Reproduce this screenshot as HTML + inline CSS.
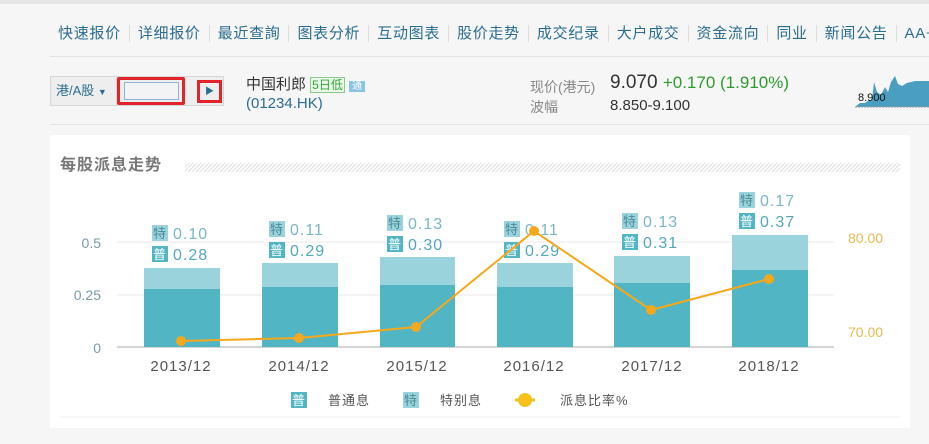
<!DOCTYPE html>
<html><head><meta charset="utf-8"><style>
body{margin:0;width:929px;height:444px;background:#f6f6f6;font-family:"Liberation Sans","Noto Sans CJK SC",sans-serif;position:relative;overflow:hidden}
.a{position:absolute;white-space:nowrap}
.nav span{color:#2b6d8e;font-size:15px;letter-spacing:0.7px;padding:0 8px;border-right:1px solid #ddd}
</style></head><body>
<div class="a" style="left:0;top:0;width:929px;height:4px;background:#e6e6e6"></div>
<div class="a nav" style="left:50px;top:24px;font-size:15px;line-height:20px"><span style="padding-left:8px">快速报价</span><span>详细报价</span><span>最近查詢</span><span>图表分析</span><span>互动图表</span><span>股价走势</span><span>成交纪录</span><span>大户成交</span><span>资金流向</span><span>同业</span><span>新闻公告</span><span style="border:0">AA+</span></div>
<div class="a" style="left:50px;top:56px;width:879px;height:1px;background:#e2e2e2"></div>
<div class="a" style="left:50px;top:76px;width:174px;height:30px;background:#eee;border:1px solid #d6d6d6;box-sizing:border-box"></div>
<div class="a" style="left:50px;top:76px;width:67px;height:30px;border-right:1px solid #d6d6d6;box-sizing:border-box;color:#2b6d8e;font-size:13px;line-height:30px;padding-left:6px">港/A股 <span style="font-size:9px">▼</span></div>
<div class="a" style="left:117px;top:77px;width:68px;height:28px;border:3px solid #e0252a;box-sizing:border-box;border-radius:2px"></div>
<div class="a" style="left:124px;top:82px;width:55px;height:18px;border:1px solid #8cb3d9;background:#f3f3f6;box-sizing:border-box"></div>
<div class="a" style="left:197px;top:80px;width:25px;height:23px;border:3px solid #e0252a;box-sizing:border-box;color:#2b6d8e;font-size:9px;line-height:17px;text-align:center">▶</div>
<div class="a" style="left:246px;top:73px;font-size:15px;color:#333">中国利郎 <span style="font-size:12px;color:#3a3;border:1px solid #8c8;background:#eaf7ea;padding:0 1px">5日低</span> <span style="font-size:10px;color:#fff;background:#8bc3e6;padding:0 3px">通</span></div>
<div class="a" style="left:246px;top:95px;font-size:15px;color:#2b6d8e">(01234.HK)</div>
<div class="a" style="left:530px;top:77px;font-size:14px;color:#888">现价(港元)</div>
<div class="a" style="left:530px;top:97px;font-size:14px;color:#888">波幅</div>
<div class="a" style="left:610px;top:72px;font-size:19px;color:#333">9.070 <span style="color:#2e9b2e;font-size:17px">+0.170 (1.910%)</span></div>
<div class="a" style="left:610px;top:97px;font-size:15px;color:#333">8.850-9.100</div>
<svg class="a" style="left:855px;top:70px" width="74" height="40"><path d="M0 37 L5 33 L10 33 L14 30 L17 30 L19 12 L22 22 L26 25 L30 17 L33 22 L36 12 L40 6 L43 14 L47 16 L52 13 L60 11 L74 11 L74 37 Z" fill="#4a9ec0"/><text x="3" y="31" font-size="11" fill="#111" font-family="Liberation Sans">8.900</text><line x1="0" y1="37" x2="74" y2="37" stroke="#999" stroke-dasharray="2,1"/></svg>
<div class="a" style="left:50px;top:124px;width:879px;height:1px;background:#e2e2e2"></div>
<div class="a" style="left:50px;top:135px;width:860px;height:293px;background:#fff"></div>
<svg class="a" style="left:0;top:0" width="929" height="444" font-family="Liberation Sans,Noto Sans CJK SC,sans-serif">
<defs><pattern id="h" width="4" height="4" patternUnits="userSpaceOnUse"><path d="M0 4 L4 0" stroke="#ddd" stroke-width="1"/></pattern></defs>
<text x="60" y="170" font-size="16" fill="#777" font-weight="bold" letter-spacing="1">每股派息走势</text>
<rect x="185" y="163" width="715" height="9" fill="url(#h)"/>
<g stroke="#e8e8e8"><line x1="117" y1="242" x2="834" y2="242"/><line x1="117" y1="295" x2="834" y2="295"/></g>
<line x1="117" y1="347" x2="834" y2="347" stroke="#aaa"/>
<g font-size="14" fill="#7a9aa6" text-anchor="end"><text x="101" y="248">0.5</text><text x="101" y="300">0.25</text><text x="101" y="353">0</text></g>
<g font-size="14" fill="#e8b94e"><text x="848" y="243">80.00</text><text x="848" y="337">70.00</text></g>
<g fill="#9ad3dc">
<rect x="144" y="268" width="76" height="79"/><rect x="262" y="263" width="76" height="84"/><rect x="380" y="257" width="75" height="90"/><rect x="497" y="263" width="76" height="84"/><rect x="614" y="256" width="76" height="91"/><rect x="732" y="235" width="76" height="112"/></g>
<g fill="#52b5c4">
<rect x="144" y="289" width="76" height="58"/><rect x="262" y="287" width="76" height="60"/><rect x="380" y="285" width="75" height="62"/><rect x="497" y="287" width="76" height="60"/><rect x="614" y="283" width="76" height="64"/><rect x="732" y="270" width="76" height="77"/></g>
<g font-size="15" fill="#555" text-anchor="middle" letter-spacing="1"><text x="181" y="371">2013/12</text><text x="299" y="371">2014/12</text><text x="417" y="371">2015/12</text><text x="534" y="371">2016/12</text><text x="652" y="371">2017/12</text><text x="769" y="371">2018/12</text></g>
<g font-size="16" letter-spacing="1">
<rect x="152" y="225" width="16" height="16" fill="#9ad3dc"/><text x="153" y="238" font-size="13" fill="#4a8a96">特</text><text x="173" y="239" fill="#7ab8c4">0.10</text>
<rect x="152" y="246" width="16" height="16" fill="#52b5c4"/><text x="153" y="259" font-size="13" fill="#fff">普</text><text x="173" y="260" fill="#52a8b6">0.28</text>
<rect x="269" y="221" width="16" height="16" fill="#9ad3dc"/><text x="270" y="234" font-size="13" fill="#4a8a96">特</text><text x="290" y="235" fill="#7ab8c4">0.11</text>
<rect x="269" y="242" width="16" height="16" fill="#52b5c4"/><text x="270" y="255" font-size="13" fill="#fff">普</text><text x="290" y="256" fill="#52a8b6">0.29</text>
<rect x="387" y="215" width="16" height="16" fill="#9ad3dc"/><text x="388" y="228" font-size="13" fill="#4a8a96">特</text><text x="408" y="229" fill="#7ab8c4">0.13</text>
<rect x="387" y="236" width="16" height="16" fill="#52b5c4"/><text x="388" y="249" font-size="13" fill="#fff">普</text><text x="408" y="250" fill="#52a8b6">0.30</text>
<rect x="504" y="221" width="16" height="16" fill="#9ad3dc"/><text x="505" y="234" font-size="13" fill="#4a8a96">特</text><text x="525" y="235" fill="#7ab8c4">0.11</text>
<rect x="504" y="242" width="16" height="16" fill="#52b5c4"/><text x="505" y="255" font-size="13" fill="#fff">普</text><text x="525" y="256" fill="#52a8b6">0.29</text>
<rect x="622" y="213" width="16" height="16" fill="#9ad3dc"/><text x="623" y="226" font-size="13" fill="#4a8a96">特</text><text x="643" y="227" fill="#7ab8c4">0.13</text>
<rect x="622" y="234" width="16" height="16" fill="#52b5c4"/><text x="623" y="247" font-size="13" fill="#fff">普</text><text x="643" y="248" fill="#52a8b6">0.31</text>
<rect x="739" y="192" width="16" height="16" fill="#9ad3dc"/><text x="740" y="205" font-size="13" fill="#4a8a96">特</text><text x="760" y="206" fill="#7ab8c4">0.17</text>
<rect x="739" y="213" width="16" height="16" fill="#52b5c4"/><text x="740" y="226" font-size="13" fill="#fff">普</text><text x="760" y="227" fill="#52a8b6">0.37</text>
</g>
<polyline points="181,341 299,338 416,327 534,231 651,310 769,279" fill="none" stroke="#f5a81c" stroke-width="2"/>
<g fill="#f5a81c"><circle cx="181" cy="341" r="5"/><circle cx="299" cy="338" r="5"/><circle cx="416" cy="327" r="5"/><circle cx="534" cy="231" r="5"/><circle cx="651" cy="310" r="5"/><circle cx="769" cy="279" r="5"/></g>
<rect x="291" y="392" width="16" height="16" fill="#52b5c4"/><text x="292" y="405" font-size="13" fill="#fff">普</text>
<text x="328" y="405" font-size="13" fill="#555" letter-spacing="1">普通息</text>
<rect x="403" y="392" width="16" height="16" fill="#9ad3dc"/><text x="404" y="405" font-size="13" fill="#4a8a96">特</text>
<text x="440" y="405" font-size="13" fill="#555" letter-spacing="1">特别息</text>
<line x1="515" y1="400" x2="535" y2="400" stroke="#f5c21c" stroke-width="3"/><circle cx="525" cy="400" r="7" fill="#f5c21c"/>
<text x="560" y="405" font-size="13" fill="#555" letter-spacing="1">派息比率%</text>
<line x1="60" y1="417" x2="900" y2="417" stroke="#eee"/>
</svg>
</body></html>
